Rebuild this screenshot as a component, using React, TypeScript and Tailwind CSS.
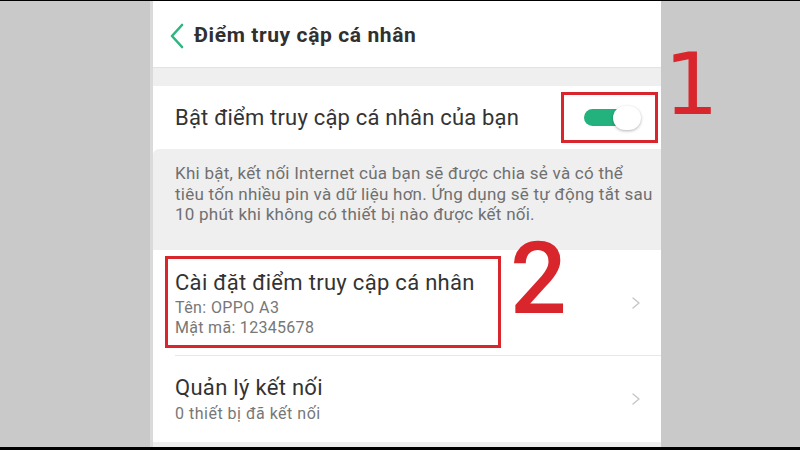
const font = { fontFamily: "Roboto, 'Noto Sans', sans-serif" };

function Chevron() {
  return (
    <svg width="10" height="12" viewBox="0 0 10 12" className="shrink-0">
      <path d="M2 1 L8 6 L2 11" fill="none" stroke="#c6c6c6" strokeWidth="1.4" strokeLinecap="round" strokeLinejoin="round" />
    </svg>
  );
}

export default function App() {
  return (
    <div className="w-[800px] h-[450px] bg-[#c9c9c9] flex flex-col relative overflow-hidden" style={font}>
      <div className="h-px bg-black" />
      <div className="flex-1 flex">
        <div className="w-[150px]" />
        <div className="w-[3px] bg-[#dadada]" />
        {/* phone screen */}
        <div className="w-[508px] bg-white flex flex-col">
          {/* header */}
          <div className="h-[67px] flex items-center pl-[16px] pt-[4px] border-b border-[#e2e2e2]">
            <svg width="16" height="26" viewBox="0 0 16 26" className="mr-[9px]">
              <path d="M13 2 L3 13 L13 24" fill="none" stroke="#2db67f" strokeWidth="2.6" strokeLinecap="round" strokeLinejoin="round" />
            </svg>
            <h1 className="text-[21px] font-bold text-[#303030] tracking-[0.6px]">Điểm truy cập cá nhân</h1>
          </div>
          <div className="h-[18px] bg-[#efefef]" />

          {/* toggle row */}
          <div className="h-[63px] flex items-center justify-between pl-[22px] pr-[20px]">
            <span className="text-[22px] text-[#333] tracking-[0.2px]">Bật điểm truy cập cá nhân của bạn</span>
            <div className="relative w-[57px] h-[24px] flex items-center">
              <div className="h-[17px] w-[45px] rounded-full bg-[#23b27d]" />
              <div className="absolute right-0 top-0 w-[28px] h-[24px] rounded-full bg-white shadow-[0_1px_3px_rgba(0,0,0,0.3)]" />
            </div>
          </div>

          {/* description */}
          <div className="h-[101px] bg-[#efefef] pl-[22px] pr-[4px] pt-[14px] rounded-tl-[6px] overflow-hidden">
            <p className="text-[17px] leading-[20.5px] text-[#707070] tracking-[0.25px] whitespace-nowrap">
              Khi bật, kết nối Internet của bạn sẽ được chia sẻ và có thể
              <br />
              tiêu tốn nhiều pin và dữ liệu hơn. Ứng dụng sẽ tự động tắt sau
              <br />
              10 phút khi không có thiết bị nào được kết nối.
            </p>
          </div>

          {/* hotspot settings */}
          <div className="ml-[22px] pr-[20px] h-[106px] flex items-center justify-between border-b border-[#e8e8e8]">
            <div className="flex flex-col pt-[2px]">
              <span className="text-[22px] text-[#333] leading-[28px] tracking-[0.3px]">Cài đặt điểm truy cập cá nhân</span>
              <span className="text-[16px] text-[#777] leading-[20px] mt-[1px] tracking-[0.4px]">Tên: OPPO A3</span>
              <span className="text-[16px] text-[#777] leading-[20px] tracking-[0.3px]">Mật mã: 12345678</span>
            </div>
            <Chevron />
          </div>

          {/* manage connections */}
          <div className="ml-[22px] pr-[20px] h-[86px] flex items-center justify-between">
            <div className="flex flex-col">
              <span className="text-[22px] text-[#333] leading-[28px] tracking-[0.3px]">Quản lý kết nối</span>
              <span className="text-[16px] text-[#777] leading-[20px] mt-[2px] tracking-[0.5px]">0 thiết bị đã kết nối</span>
            </div>
            <Chevron />
          </div>
          <div className="flex-1 bg-[#eeeeee]" />
        </div>
        <div className="flex-1" />
      </div>
      <div className="h-[3px] bg-black" />

      {/* annotations */}
      <div className="absolute left-[561px] top-[92px] w-[97px] h-[51px] border-[3px] border-[#d8262c]" />
      <div className="absolute left-[664px] top-[34px] text-[86px] leading-[100px] text-[#d8262c] font-['DejaVu_Sans',sans-serif]">1</div>
      <div className="absolute left-[165px] top-[256px] w-[336px] h-[92px] border-[3px] border-[#d8262c]" />
      <div className="absolute left-[510px] top-[224px] text-[100px] leading-[110px] font-medium text-[#d8262c]" style={font}>2</div>
    </div>
  );
}
